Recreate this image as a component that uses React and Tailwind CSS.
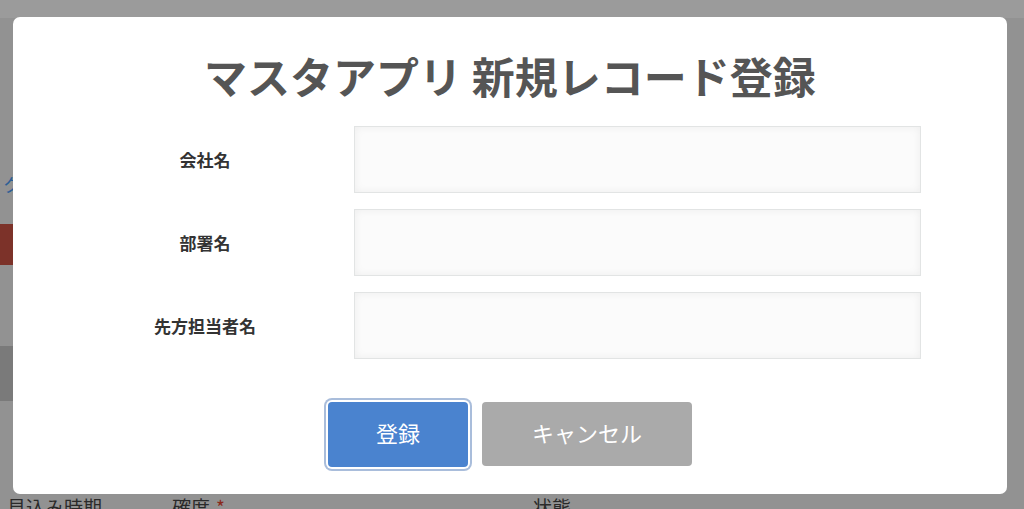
import React from "react";

const jp = { fontFamily: '"Noto Sans CJK JP", "Noto Sans", sans-serif' };

function Field({ label }) {
  return (
    <div className="flex items-center h-[67px]">
      <div className="ml-[47px] w-[290px] text-center text-[17px] font-bold text-[#333333]">{label}</div>
      <div className="ml-[4px] w-[567px] h-[67px] border border-[#e2e4e4] bg-[#fbfbfb] shadow-[inset_0_0_8px_rgba(0,0,0,0.06)]" />
    </div>
  );
}

export default function App() {
  return (
    <div className="relative w-[1024px] h-[509px] overflow-hidden bg-[#929292]" style={jp}>
      {/* underlying page (dimmed) */}
      <div className="flex flex-col">
        <div className="h-[18px] bg-[#9b9b9b]" />
        <div className="mt-[157px] h-[18px] pl-[3px] text-[18px] leading-[18px] text-[#2d5e96]">ク</div>
        <div className="mt-[31px] h-[41px] w-[600px] bg-[#7c3229]" />
        <div className="mt-[81px] h-[55px] w-[600px] bg-[#7a7a7a]" />
        <div className="mt-[96px] flex text-[19px] leading-[19px] text-[#2a2a2a]">
          <span className="ml-[7px] w-[165px]">見込み時期</span>
          <span className="w-[361px]">確度<span className="ml-[6px] text-[#8a2a1c]">*</span></span>
          <span>状態</span>
        </div>
      </div>

      {/* modal */}
      <div className="absolute left-[13px] top-[17px] w-[994px] h-[477px] rounded-[7px] bg-white flex flex-col">
        <h1 className="pt-[32px] text-center text-[43px] leading-[52px] font-bold text-[#555555]">
          マスタアプリ 新規レコード登録
        </h1>
        <div className="mt-[25px] flex flex-col gap-[16px]">
          <Field label="会社名" />
          <Field label="部署名" />
          <Field label="先方担当者名" />
        </div>
        <div className="mt-[43px] flex justify-center gap-[14px]">
          <button className="w-[140px] h-[65px] pb-[4px] rounded-[4px] bg-[#4a83cf] text-white text-[22px] shadow-[0_0_0_2px_#ffffff,0_0_0_4px_#a9bddb]">
            登録
          </button>
          <button className="w-[210px] h-[64px] pb-[4px] rounded-[4px] bg-[#aaaaaa] text-white text-[22px]">
            キャンセル
          </button>
        </div>
      </div>
    </div>
  );
}
